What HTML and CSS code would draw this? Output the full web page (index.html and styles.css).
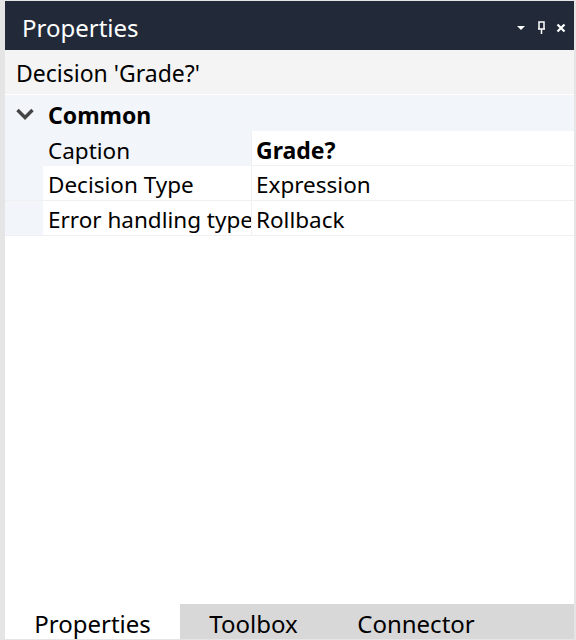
FILE: index.html
```html
<!DOCTYPE html>
<html>
<head>
<meta charset="utf-8">
<link rel="stylesheet" href="styles.css">
</head>
<body>
<div class="panel">
  <div class="titlebar">
    <span class="title">Properties</span>
    <div class="tools">
      <svg class="tool" width="10" height="10" viewBox="0 0 10 10"><path d="M1 3h8L5 7z" fill="#fff"/></svg>
      <svg class="tool" width="10" height="14" viewBox="0 0 10 14"><path d="M3 1h5v7H3z M2 8h7 M5.5 8v5" fill="none" stroke="#fff" stroke-width="1.5"/></svg>
      <svg class="tool" width="10" height="10" viewBox="0 0 10 10"><path d="M1.5 1.5l7 7M8.5 1.5l-7 7" stroke="#fff" stroke-width="2.2"/></svg>
    </div>
  </div>
  <div class="subject">Decision 'Grade?'</div>
  <div class="grid">
    <div class="cat">
      <svg class="chev" width="20" height="12" viewBox="0 0 20 12"><path d="M2.5 2l7.5 7.5 7.5-7.5" fill="none" stroke="#444" stroke-width="3.4"/></svg>
      <span class="cat-name">Common</span>
    </div>
    <div class="row selected">
      <div class="margin"></div>
      <div class="name">Caption</div>
      <div class="value bold">Grade?</div>
    </div>
    <div class="row">
      <div class="margin"></div>
      <div class="name">Decision Type</div>
      <div class="value">Expression</div>
    </div>
    <div class="row">
      <div class="margin"></div>
      <div class="name">Error handling type</div>
      <div class="value">Rollback</div>
    </div>
  </div>
  <div class="empty"></div>
  <div class="tabs">
    <div class="tab active">Properties</div>
    <div class="tab t2">Toolbox</div>
    <div class="tab t3">Connector</div>
  </div>
</div>
</body>
</html>
```
FILE: styles.css
```css
html, body {
  margin: 0;
  padding: 0;
  background: #ffffff;
}
body {
  font-family: "Noto Sans", "Open Sans", sans-serif;
  color: #000;
}
.panel {
  box-sizing: border-box;
  width: 576px;
  height: 640px;
  border-style: solid;
  border-color: #e5e5e5;
  border-width: 1px 2px 1px 5px;
  display: flex;
  flex-direction: column;
  overflow: hidden;
}
.titlebar {
  height: 49px;
  flex: none;
  background: #222a3a;
  color: #fff;
  display: flex;
  align-items: center;
  padding-left: 17px;
  padding-right: 8px;
}
.title {
  font-size: 24px;
  flex: 1;
  line-height: 1;
  padding-top: 4px;
}
.tools {
  display: flex;
  align-items: center;
  gap: 10px;
  margin-top: 4px;
}
.subject {
  height: 44px;
  flex: none;
  background: #f4f4f4;
  border-bottom: 1px solid #ffffff;
  font-size: 23px;
  display: flex;
  align-items: center;
  padding-left: 11px;
  padding-top: 1px;
  box-sizing: border-box;
  height: 45px;
}
.grid {
  flex: none;
}
.cat {
  height: 36px;
  background: #f2f5fa;
  display: flex;
  align-items: center;
}
.chev {
  margin-left: 10px;
  margin-right: 13px;
  margin-top: 1px;
}
.cat-name {
  font-size: 23px;
  font-weight: bold;
  padding-top: 3px;
}
.row {
  display: grid;
  grid-template-columns: 38px 209px 1fr;
  height: 34px;
  border-bottom: 1px solid #f0f0f0;
  font-size: 22.5px;
}
.margin {
  background: #f2f5fa;
}
.name {
  padding-left: 5px;
  padding-top: 3px;
  border-right: 1px solid #f0f0f0;
  display: flex;
  align-items: center;
  white-space: nowrap;
  overflow: hidden;
}
.selected .name {
  background: #f2f5fa;
}
.value {
  padding-left: 4px;
  padding-top: 3px;
  display: flex;
  align-items: center;
  white-space: nowrap;
}
.bold {
  font-weight: bold;
  font-size: 23px;
}
.empty {
  flex: 1;
}
.tabs {
  height: 35px;
  flex: none;
  background: #d8d8d8;
  display: flex;
}
.tab {
  font-size: 24px;
  display: flex;
  align-items: center;
  justify-content: center;
  padding-top: 4px;
  box-sizing: border-box;
}
.tab.active {
  background: #fff;
  width: 175px;
}
.t2 { width: 147px; }
.t3 { width: 178px; }
```
